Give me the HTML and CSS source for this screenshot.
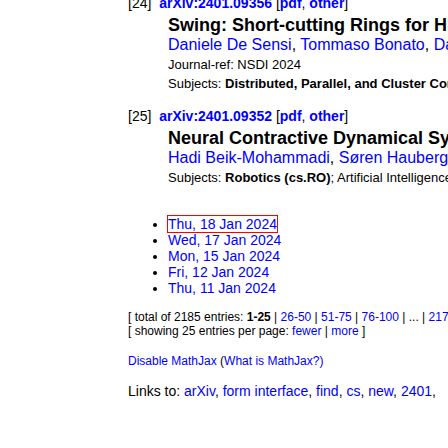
FILE: index.html
```html
<!DOCTYPE html>
<html lang="en">
<head>
<meta charset="utf-8">
<title>Computer Science listing</title>
<link rel="stylesheet" href="styles.css">
</head>
<body>
<main class="listing">
  <dl class="entries">
    <dt class="entry-id">[24]&nbsp; <b><a href="#">arXiv:2401.09356</a></b> [<b><a href="#">pdf</a></b>, <b><a href="#">other</a></b>]</dt>
    <dd class="entry">
      <div class="title">Swing: Short-cutting Rings for Higher Bandwidth Allreduce</div>
      <div class="authors"><a href="#">Daniele De Sensi</a>, <a href="#">Tommaso Bonato</a>, <a href="#">David Saam</a></div>
      <div class="meta">Journal-ref: NSDI 2024</div>
      <div class="meta">Subjects: <b>Distributed, Parallel, and Cluster Computing (cs.DC)</b></div>
    </dd>
    <dt class="entry-id">[25]&nbsp; <b><a href="#">arXiv:2401.09352</a></b> [<b><a href="#">pdf</a></b>, <b><a href="#">other</a></b>]</dt>
    <dd class="entry">
      <div class="title">Neural Contractive Dynamical Systems</div>
      <div class="authors"><a href="#">Hadi Beik-Mohammadi</a>, <a href="#">Søren Hauberg</a>, <a href="#">Georgios Arvanitidis</a></div>
      <div class="meta">Subjects: <b>Robotics (cs.RO)</b>; Artificial Intelligence (cs.AI)</div>
    </dd>
  </dl>
  <ul class="days">
    <li><a class="current" href="#">Thu, 18 Jan 2024</a></li>
    <li><a href="#">Wed, 17 Jan 2024</a></li>
    <li><a href="#">Mon, 15 Jan 2024</a></li>
    <li><a href="#">Fri, 12 Jan 2024</a></li>
    <li><a href="#">Thu, 11 Jan 2024</a></li>
  </ul>
  <div class="paging">
    <div>[ total of 2185 entries: <b>1-25</b> | <a href="#">26-50</a> | <a href="#">51-75</a> | <a href="#">76-100</a> | ... | <a href="#">2176-2185</a> ]</div>
    <div>[ showing 25 entries per page: <a href="#">fewer</a> | <a href="#">more</a> ]</div>
  </div>
  <div class="mathjax"><a href="#">Disable MathJax</a> (<a href="#">What is MathJax?)</a></div>
  <nav class="links">Links to: <a href="#">arXiv</a>, <a href="#">form interface</a>, <a href="#">find</a>, <a href="#">cs</a>, <a href="#">new</a>, <a href="#">2401</a>,</nav>
</main>
</body>
</html>
```
FILE: styles.css
```css
body {
  margin: 0;
  background: #fff;
  color: #000;
  font: 14px/16px "Liberation Sans", Arial, sans-serif;
}
a {
  color: #00f;
  text-decoration: none;
}
.listing {
  margin-top: -5px;
  padding-left: 128px;
  overflow: hidden;
  white-space: nowrap;
}
.entries {
  margin: 0;
}
.entry {
  margin: 0 0 15px 40px;
}
.title {
  padding-top: 4px;
  font-size: 18px;
  font-weight: bold;
  line-height: 20px;
}
.authors {
  font-size: 16px;
  line-height: 20px;
}
.meta {
  font-size: 13px;
  line-height: 19px;
}
.days {
  margin: 29px 0 14px;
  padding-left: 40px;
}
.current {
  outline: 1px solid #f00;
}
.paging {
  margin-bottom: 16px;
  font-size: 12px;
  line-height: 14px;
}
.mathjax {
  margin-bottom: 15px;
  font-size: 12px;
  line-height: 14px;
}
```
